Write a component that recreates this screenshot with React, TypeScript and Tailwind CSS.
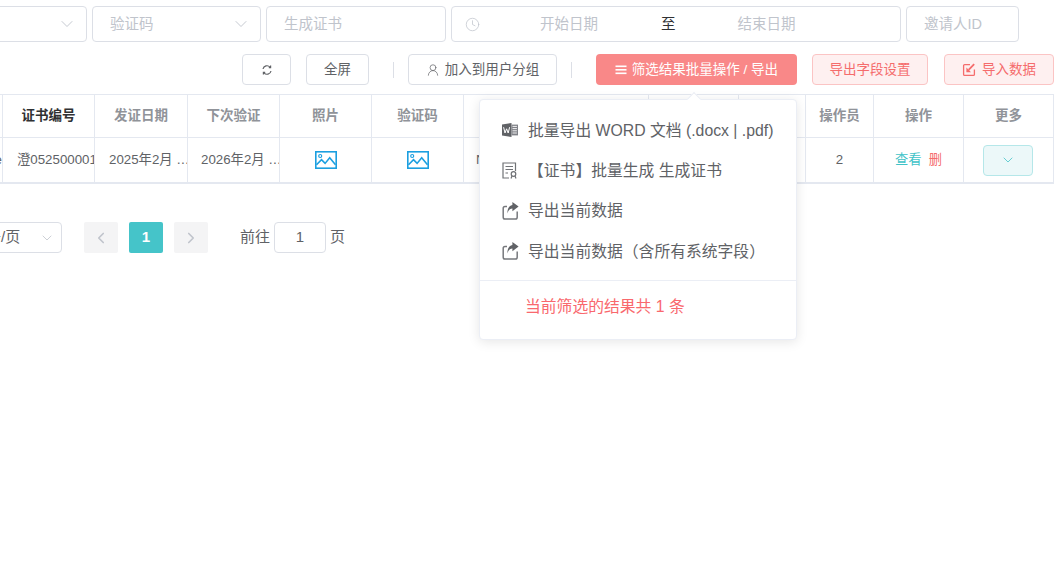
import { ChevronDown, ChevronLeft, ChevronRight, Clock, UserRound } from "lucide-react";

const font = "font-['Liberation_Sans','Noto_Sans_CJK_SC',sans-serif]";

const columns = [
  { title: "", width: "w-[92px]" },
  { title: "证书编号", width: "w-[92px]", dark: true },
  { title: "发证日期", width: "w-[93px]" },
  { title: "下次验证", width: "w-[92px]" },
  { title: "照片", width: "w-[92px]" },
  { title: "验证码", width: "w-[92px]" },
  { title: "", width: "w-[185px]" },
  { title: "", width: "w-[90px]" },
  { title: "", width: "w-[67px]" },
  { title: "操作员", width: "w-[68px]" },
  { title: "操作", width: "w-[90px]" },
  { title: "更多", width: "w-[90px]" },
];

function RefreshIcon() {
  return (
    <svg width="12" height="12" viewBox="0 0 12 12" fill="none" stroke="#606266" strokeWidth="1.2">
      <path d="M2 5A4 4 0 0 1 9 3.2" />
      <path d="M10 7A4 4 0 0 1 3 8.8" />
      <path d="M9.6 1.6v2H7.8M2.4 10.4v-2h1.8" />
    </svg>
  );
}

function MenuIcon() {
  return (
    <svg width="12" height="10" viewBox="0 0 12 10" fill="#fff">
      <rect x="0.5" y="0.5" width="11" height="1.6" />
      <rect x="0.5" y="4" width="11" height="1.6" />
      <rect x="0.5" y="7.5" width="11" height="1.6" />
    </svg>
  );
}

function ImportIcon() {
  return (
    <svg width="14" height="14" viewBox="0 0 14 14" fill="none" stroke="#f56c6c" strokeWidth="1.3">
      <path d="M8 1.6H2.6a1 1 0 0 0-1 1v8.8a1 1 0 0 0 1 1h8.8a1 1 0 0 0 1-1V6.5" />
      <path d="M12.2 1.2 6.6 6.8" strokeWidth="1.8" />
      <path d="M4.4 4.6v4.6H9z" fill="#f56c6c" stroke="none" />
    </svg>
  );
}

function PictureIcon() {
  return (
    <svg width="22" height="18" viewBox="0 0 22 18" fill="none" stroke="#1b9fe0" strokeWidth="1.6">
      <rect x="0.8" y="0.8" width="20.4" height="16.4" />
      <circle cx="5.2" cy="5" r="1.5" strokeWidth="1.2" />
      <path d="M1.5 13.8 6.5 8.6l3.6 3.8 4.6-5.6 5.8 7" />
    </svg>
  );
}

function WordIcon() {
  return (
    <svg width="16" height="14" viewBox="0 0 16 14">
      <path d="M0 1.6 9.5 0v14L0 12.4z" fill="#606266" />
      <rect x="9.5" y="1.6" width="6.5" height="10.8" fill="#808288" />
      <path d="M10.5 3.4h4.4M10.5 5.6h4.4M10.5 7.8h4.4M10.5 10h4.4" stroke="#fff" strokeWidth="0.9" />
      <path d="M1.6 4.2 3 10l1.6-4.2L6.2 10l1.4-5.8" fill="none" stroke="#fff" strokeWidth="1" />
    </svg>
  );
}

function CertIcon() {
  return (
    <svg width="16" height="17" viewBox="0 0 16 17" fill="none" stroke="#707276" strokeWidth="1.2">
      <path d="M7 16H1V1h12.5v8" />
      <path d="M3.5 4.5h7.5M3.5 7.5h7.5M3.5 11h2.5" />
      <circle cx="11.5" cy="12" r="2.3" />
      <path d="m10 14-1 2.5M13 14l1 2.5" />
    </svg>
  );
}

function ShareIcon() {
  return (
    <svg width="17" height="18" viewBox="0 0 17 18" fill="none">
      <path d="M5 4.4H3A1.8 1.8 0 0 0 1.2 6.2v9A1.8 1.8 0 0 0 3 17h10.4a1.8 1.8 0 0 0 1.8-1.8V9.5" stroke="#77797d" strokeWidth="1.5" />
      <path d="M10.4 0 16.6 4.6l-6.2 4.6V6.6C8.2 6.6 6.4 8 5.4 11.6 5.2 6.8 7.2 3.4 10.4 3z" fill="#606266" />
    </svg>
  );
}

function FilterBox({ label, width, select }: { label: string; width: string; select?: boolean }) {
  return (
    <div className={`${width} flex-none h-[36px] flex items-center justify-between bg-white border border-[#dcdfe6] rounded-[4px] pl-[17px] pr-[9px] text-[14.5px] text-[#c0c4cc]`}>
      <span className="pt-[1px]">{label}</span>
      {select && <ChevronDown size={20} strokeWidth={1.1} className="text-[#c0c4cc]" />}
    </div>
  );
}

export default function App() {
  return (
    <div className={`${font} relative w-[1059px] h-[567px] overflow-hidden bg-white`}>
      {/* 검색 필터 */}
      <div className="flex justify-end gap-[5px] pt-[6px] pr-[40px]">
        <FilterBox label="" width="w-[170px]" select />
        <FilterBox label="验证码" width="w-[169px]" select />
        <FilterBox label="生成证书" width="w-[180px]" />
        <div className="w-[450px] flex-none h-[36px] flex items-center bg-white border border-[#dcdfe6] rounded-[4px] pl-[13px] text-[14.5px] text-[#c0c4cc]">
          <Clock size={15} strokeWidth={1.2} />
          <span className="ml-[60px] w-[60px] pt-[1px] whitespace-nowrap">开始日期</span>
          <span className="ml-[61px] pt-[1px] text-[#303133]">至</span>
          <span className="ml-[62px] pt-[1px]">结束日期</span>
        </div>
        <FilterBox label="邀请人ID" width="w-[113px]" />
      </div>

      {/* 툴바 */}
      <div className="flex justify-end items-center h-[31px] mt-[12px] pr-[5px] text-[13.5px]">
        <button className="w-[49px] h-[31px] flex items-center justify-center bg-white border border-[#dcdfe6] rounded-[4px]">
          <RefreshIcon />
        </button>
        <button className="w-[63px] h-[31px] ml-[15px] pt-[2px] bg-white border border-[#dcdfe6] rounded-[4px] text-[#606266]">全屏</button>
        <div className="w-px h-[16px] mx-[14px] ml-[24px] bg-[#dcdfe6]" />
        <button className="w-[149px] h-[31px] flex items-center justify-center gap-[5px] bg-white border border-[#dcdfe6] rounded-[4px] text-[#606266]">
          <UserRound size={14} strokeWidth={1.2} />
          <span className="pt-[1px]">加入到用户分组</span>
        </button>
        <div className="w-px h-[16px] ml-[14px] mr-[24px] bg-[#dcdfe6]" />
        <button className="w-[201px] h-[31px] flex items-center justify-center gap-[5px] bg-[#f98888] rounded-[4px] text-white">
          <MenuIcon />
          <span className="pt-[1px]">筛选结果批量操作 / 导出</span>
        </button>
        <button className="w-[116px] h-[31px] ml-[15px] pt-[2px] bg-[#fef0f0] border border-[#fbc4c4] rounded-[4px] text-[#f56c6c]">导出字段设置</button>
        <button className="w-[110px] h-[31px] ml-[16px] flex items-center justify-center gap-[6px] bg-[#fef0f0] border border-[#fbc4c4] rounded-[4px] text-[#f56c6c]">
          <ImportIcon />
          <span className="pt-[1px]">导入数据</span>
        </button>
      </div>

      {/* 테이블 */}
      <div className="flex justify-end mt-[9px] pr-[5px]">
        <div className="flex-none border-t border-b-2 border-[#e4e8f0]">
          <div className="flex h-[43px] border-b border-[#e4e8f0]">
            {columns.map((col, i) => (
              <div key={i} className={`${col.width} flex-none flex items-center justify-center border-r border-[#e4e8f0] text-[13.5px] font-bold ${col.dark ? "text-[#303133]" : "text-[#909399]"}`}>
                {col.title}
              </div>
            ))}
          </div>
          <div className="flex h-[44px] text-[13.3px] text-[#606266]">
            <div className="w-[92px] flex-none flex items-center justify-end border-r border-[#e4e8f0] overflow-hidden">e</div>
            <div className="w-[92px] flex-none flex items-center pl-[14px] border-r border-[#e4e8f0] overflow-hidden whitespace-nowrap">澄052500001</div>
            <div className="w-[93px] flex-none flex items-center pl-[14px] border-r border-[#e4e8f0] overflow-hidden whitespace-nowrap">2025年2月 …</div>
            <div className="w-[92px] flex-none flex items-center pl-[13px] border-r border-[#e4e8f0] overflow-hidden whitespace-nowrap">2026年2月 …</div>
            <div className="w-[92px] flex-none flex items-center justify-center border-r border-[#e4e8f0]"><PictureIcon /></div>
            <div className="w-[92px] flex-none flex items-center justify-center border-r border-[#e4e8f0]"><PictureIcon /></div>
            <div className="w-[185px] flex-none flex items-center pl-[12px] border-r border-[#e4e8f0]">N</div>
            <div className="w-[90px] flex-none border-r border-[#e4e8f0]" />
            <div className="w-[67px] flex-none border-r border-[#e4e8f0]" />
            <div className="w-[68px] flex-none flex items-center justify-center border-r border-[#e4e8f0]">2</div>
            <div className="w-[90px] flex-none flex items-center justify-center gap-[7px] border-r border-[#e4e8f0]">
              <span className="text-[#3fc3c8]">查看</span>
              <span className="text-[#f56c6c]">删</span>
            </div>
            <div className="w-[90px] flex-none flex items-center justify-center pr-[2px] border-r border-[#e4e8f0]">
              <div className="w-[50px] h-[31px] flex items-center justify-center bg-[#ecf8f9] border border-[#b5e7e9] rounded-[4px]">
                <ChevronDown size={16} strokeWidth={1.2} className="text-[#45c4c9]" />
              </div>
            </div>
          </div>
        </div>
      </div>

      {/* 페이지네이션 */}
      <div className="flex items-center h-[31px] mt-[38px] text-[15px] text-[#606266]">
        <div className="w-[90px] flex-none -ml-[28px] h-[31px] flex items-center justify-between pl-[13px] pr-[6px] border border-[#dcdfe6] rounded-[4px]">
          <span className="whitespace-nowrap">条/页</span>
          <ChevronDown size={16} strokeWidth={1.2} className="text-[#c0c4cc]" />
        </div>
        <div className="w-[34px] h-[31px] ml-[22px] flex items-center justify-center bg-[#f4f4f5] rounded-[2px] text-[#c0c4cc]"><ChevronLeft size={18} strokeWidth={2.2} /></div>
        <div className="w-[34px] h-[31px] ml-[11px] flex items-center justify-center bg-[#45c4c9] rounded-[2px] text-white font-bold">1</div>
        <div className="w-[34px] h-[31px] ml-[11px] flex items-center justify-center bg-[#f4f4f5] rounded-[2px] text-[#c0c4cc]"><ChevronRight size={18} strokeWidth={2.2} /></div>
        <span className="ml-[32px]">前往</span>
        <div className="w-[52px] h-[31px] mx-[4px] flex items-center justify-center border border-[#dcdfe6] rounded-[4px]">1</div>
        <span>页</span>
      </div>

      {/* 일괄 작업 팝오버 */}
      <div className="absolute left-[479px] top-[99px] w-[318px] h-[241px] bg-white rounded-[4px] border border-[#ebeef5] shadow-[0_2px_12px_0_rgba(0,0,0,0.1)] text-[15.8px] text-[#606266]">
        <div className="absolute left-[209px] -top-[6px] w-[10px] h-[10px] rotate-45 bg-white border-l border-t border-[#ebeef5]" />
        <div className="flex flex-col pt-[10px] h-[180px]">
          <div className="flex items-center h-[40px] pl-[22px]"><WordIcon /><span className="ml-[10px] pt-[1px]">批量导出 WORD 文档 (.docx | .pdf)</span></div>
          <div className="flex items-center h-[40px] pl-[22px]"><CertIcon /><span className="ml-[10px] pt-[1px]">【证书】批量生成 生成证书</span></div>
          <div className="flex items-center h-[41px] pl-[22px]"><ShareIcon /><span className="ml-[9px] pt-[1px]">导出当前数据</span></div>
          <div className="flex items-center h-[40px] pl-[22px]"><ShareIcon /><span className="ml-[9px] pt-[1px]">导出当前数据（含所有系统字段）</span></div>
        </div>
        <div className="border-t border-[#ebeef5] pt-[14px] pl-[45px] text-[#f9686d]">当前筛选的结果共 1 条</div>
      </div>
    </div>
  );
}
